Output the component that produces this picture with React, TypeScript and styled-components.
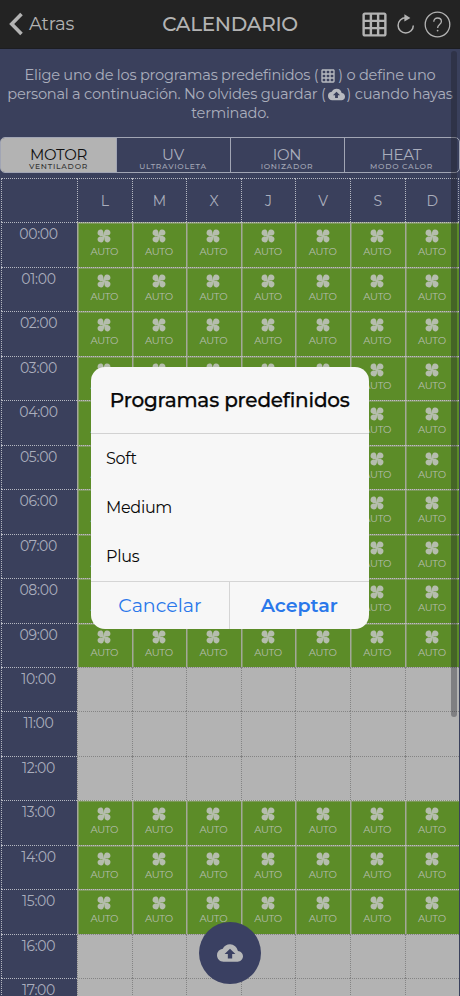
import React from 'react';
import styled, { createGlobalStyle, css } from 'styled-components';
import { MdGridOn, MdCloudUpload } from 'react-icons/md';

const GlobalStyle = createGlobalStyle`
  * { box-sizing: border-box; }
  html, body { margin: 0; height: 996px; overflow: hidden; background: #3a405c; }
  body { font-family: Montserrat, Inter, sans-serif; }
  button { font: inherit; border: 0; padding: 0; background: none; color: inherit; }
  svg { display: block; flex: none; }
`;

const Screen = styled.div`
  position: relative;
  width: 460px;
  height: 996px;
  overflow: hidden;
  background: #3a405c;
  color: #aaaebc;
`;

const Navbar = styled.header`
  display: grid;
  grid-template-columns: 120px 1fr 120px;
  align-items: center;
  height: 49px;
  background: #232323;
  border-bottom: 1px solid #1c1d22;
  color: #b3b3b3;
`;

const BackButton = styled.button`
  display: flex;
  align-items: center;
  gap: 6px;
  padding-left: 9px;
  font-size: 18px;
  letter-spacing: -0.2px;
`;

const Title = styled.h1`
  margin: 0;
  text-align: center;
  font-size: 20px;
  font-weight: 500;
  letter-spacing: -0.3px;
`;

const Actions = styled.div`
  display: flex;
  align-items: center;
  padding: 1px 0 0 20px;
`;

const Intro = styled.p`
  margin: 0;
  padding: 17px 0 0;
  height: 88px;
  text-align: center;
  font-size: 14.6px;
  line-height: 19px;
  letter-spacing: -0.24px;
  white-space: nowrap;
  svg { display: inline-block; vertical-align: -4px; margin: 0 2px; color: #b8bac0; }
`;

const Tabs = styled.nav`
  display: grid;
  grid-template-columns: 115px 114px 114px 1fr;
  height: 36px;
  border: 1px solid #a1a5b4;
  border-radius: 5px;
  overflow: hidden;
`;

const Tab = styled.button<{ $active?: boolean }>`
  display: flex;
  flex-direction: column;
  align-items: center;
  padding: 8px 1px 0 0;
  border-left: 1px solid #a1a5b4;
  ${p => p.$active && css`
    background: #b3b3b3;
    color: #101010;
    border-left-color: #b3b3b3;
  `}
`;

const TabName = styled.span`
  font-size: 15px;
  line-height: 17px;
  letter-spacing: -0.3px;
`;

const TabHint = styled.span<{ $active?: boolean }>`
  font-size: 7.6px;
  line-height: 8px;
  font-weight: 500;
  letter-spacing: 0.75px;
  color: ${p => (p.$active ? '#333' : '#a2a6b5')};
`;

const Schedule = styled.main`
  width: 459px;
  margin-top: 5px;
`;

const Row = styled.div`
  display: grid;
  grid-template-columns: 76px repeat(7, 54.6px);
  height: 44.46px;
  padding-left: 1px;
  border-right: 1px dotted #a5a9b5;
`;

const HeadCell = styled.div`
  display: flex;
  align-items: center;
  justify-content: center;
  border-left: 1px dotted #b5b8c2;
  border-top: 1px dotted #b5b8c2;
  font-size: 14px;
`;

const HourCell = styled.div`
  padding: 3px 2px 0 0;
  border-left: 1px dotted #b5b8c2;
  border-top: 1px dotted #b5b8c2;
  text-align: center;
  font-size: 14px;
  line-height: 17px;
  letter-spacing: -0.3px;
`;

const Slot = styled.div<{ $on: boolean }>`
  display: flex;
  flex-direction: column;
  align-items: center;
  padding: 6px 1px 0 0;
  gap: 3px;
  border-left: 1px solid ${p => (p.$on ? '#a3a79a' : '#a2a2a2')};
  border-top: 1px dotted ${p => (p.$on ? '#c0c2bc' : '#848484')};
  background: ${p => (p.$on ? '#5c8c28' : '#b3b3b3')};
  background-clip: padding-box;
  ${p => (p.$on
    ? css`box-shadow: inset 0.6px 0.6px #9aa588;`
    : css`border-left: 1px dotted #848484;`)}
  color: #b5bdad;
  font-size: 10px;
  line-height: 12px;
  letter-spacing: -0.25px;
`;

const SlotStrip = styled.div<{ $on: boolean }>`
  display: grid;
  grid-column: 2 / -1;
  grid-template-columns: repeat(7, 54.6px);
  background: ${p => (p.$on ? '#8b927f' : '#b3b3b3')};
`;

const ScrollThumb = styled.div`
  position: absolute;
  top: 51px;
  right: 3px;
  width: 6px;
  height: 666px;
  border-radius: 3px;
  background: rgba(25, 25, 35, 0.34);
`;

const SaveButton = styled.button`
  position: absolute;
  left: 199px;
  top: 922px;
  display: grid;
  place-items: center;
  width: 62px;
  height: 62px;
  border-radius: 50%;
  background: #3a4062;
  color: #b7b8b9;
`;

const Dialog = styled.section`
  position: absolute;
  left: 91px;
  top: 367px;
  width: 277.5px;
  height: 262px;
  display: flex;
  flex-direction: column;
  border-radius: 14px;
  overflow: hidden;
  background: #f7f7f7;
  color: #080808;
`;

const DialogTitle = styled.h2`
  margin: 0;
  height: 67px;
  border-bottom: 1px solid #d2d2d2;
  text-align: center;
  font-size: 20px;
  line-height: 67px;
  font-weight: 500;
  letter-spacing: -0.2px;
  -webkit-text-stroke: 0.25px currentColor;
  white-space: nowrap;
`;

const Options = styled.ul`
  list-style: none;
  margin: 0;
  padding: 0 0 0 15px;
  height: 147px;
`;

const Option = styled.li`
  height: 49px;
  line-height: 49px;
  font-size: 16px;
  letter-spacing: -0.3px;
`;

const DialogActions = styled.footer`
  display: grid;
  grid-template-columns: 138px 1fr;
  flex: 1;
  border-top: 1px solid #d5d5d5;
  color: #2a78ea;
  font-size: 19px;
`;

const DialogButton = styled.button<{ $primary?: boolean }>`
  ${p => p.$primary && css`
    border-left: 1px solid #d5d5d5;
    font-weight: 600;
  `}
`;

const tabs = [
  ['MOTOR', 'VENTILADOR'],
  ['UV', 'ULTRAVIOLETA'],
  ['ION', 'IONIZADOR'],
  ['HEAT', 'MODO CALOR'],
];
const days = ['L', 'M', 'X', 'J', 'V', 'S', 'D'];
const hours = Array.from({ length: 18 }, (_, h) => h);
const isOn = (h: number) => h < 10 || (h > 12 && h < 16);

const Chevron = () => (
  <svg width="14" height="24" viewBox="0 0 14 24" fill="none" stroke="currentColor" strokeWidth="3.6">
    <path d="M12.5 2 2.7 12l9.8 10" />
  </svg>
);

const RefreshGlyph = styled.svg`
  margin: 0 8px 0 7px;
`;

const Refresh = () => (
  <RefreshGlyph width="20" height="22" viewBox="0 0 20 22" fill="none" stroke="currentColor" strokeWidth="1.5">
    <path d="M10.6 3.8H9.700a7.600 7.600 0 1 0 7.600 7.600" />
    <path d="M8.400.2 14.400 4 8.400 7.600Z" fill="currentColor" stroke="none" />
  </RefreshGlyph>
);

const Help = () => (
  <svg width="27" height="27" viewBox="0 0 27 27" fill="none" stroke="currentColor" strokeWidth="1.3">
    <circle cx="13.5" cy="13.5" r="12.3" />
    <path d="M9.8 10.8c0-2.4 1.6-3.8 3.8-3.8s3.8 1.4 3.8 3.4c0 3-3.8 3.2-3.8 6.5" />
    <circle cx="13.6" cy="19.6" r="0.9" fill="currentColor" stroke="none" />
  </svg>
);

const Fan = () => (
  <svg width="14" height="14" viewBox="0 0 16 16" fill="currentColor">
    {[0, 90, 180, 270].map(a => (
      <path
        key={a}
        transform={`rotate(${a} 8 8)`}
        d="M7.400 8.600C8 6 7.400.8 11.200.6c4.400-.2 5.400 4.800 2.600 6.300C12 7.800 10 7.200 7.400 8.600Z"
      />
    ))}
  </svg>
);

export default function App() {
  return (
    <>
      <GlobalStyle />
      <Screen>
        <Navbar>
          <BackButton><Chevron />Atras</BackButton>
          <Title>CALENDARIO</Title>
          <Actions>
            <MdGridOn size={29} />
            <Refresh />
            <Help />
          </Actions>
        </Navbar>
        <Intro>
          Elige uno de los programas predefinidos (<MdGridOn size={16} />) o define uno<br />
          personal a continuación. No olvides guardar (<MdCloudUpload size={17} />) cuando hayas<br />
          terminado.
        </Intro>
        <Tabs>
          {tabs.map(([name, hint], i) => (
            <Tab key={name} $active={i === 0}>
              <TabName>{name}</TabName>
              <TabHint $active={i === 0}>{hint}</TabHint>
            </Tab>
          ))}
        </Tabs>
        <Schedule>
          <Row>
            <HeadCell />
            {days.map(d => <HeadCell key={d}>{d}</HeadCell>)}
          </Row>
          {hours.map(h => (
            <Row key={h}>
              <HourCell>{String(h).padStart(2, '0')}:00</HourCell>
              <SlotStrip $on={isOn(h)}>
                {days.map(d => (
                  <Slot key={d} $on={isOn(h)}>
                    {isOn(h) && <><Fan /><span>AUTO</span></>}
                  </Slot>
                ))}
              </SlotStrip>
            </Row>
          ))}
        </Schedule>
        <ScrollThumb />
        <SaveButton><MdCloudUpload size={26} /></SaveButton>
        <Dialog role="dialog">
          <DialogTitle>Programas predefinidos</DialogTitle>
          <Options>
            <Option>Soft</Option>
            <Option>Medium</Option>
            <Option>Plus</Option>
          </Options>
          <DialogActions>
            <DialogButton>Cancelar</DialogButton>
            <DialogButton $primary>Aceptar</DialogButton>
          </DialogActions>
        </Dialog>
      </Screen>
    </>
  );
}
